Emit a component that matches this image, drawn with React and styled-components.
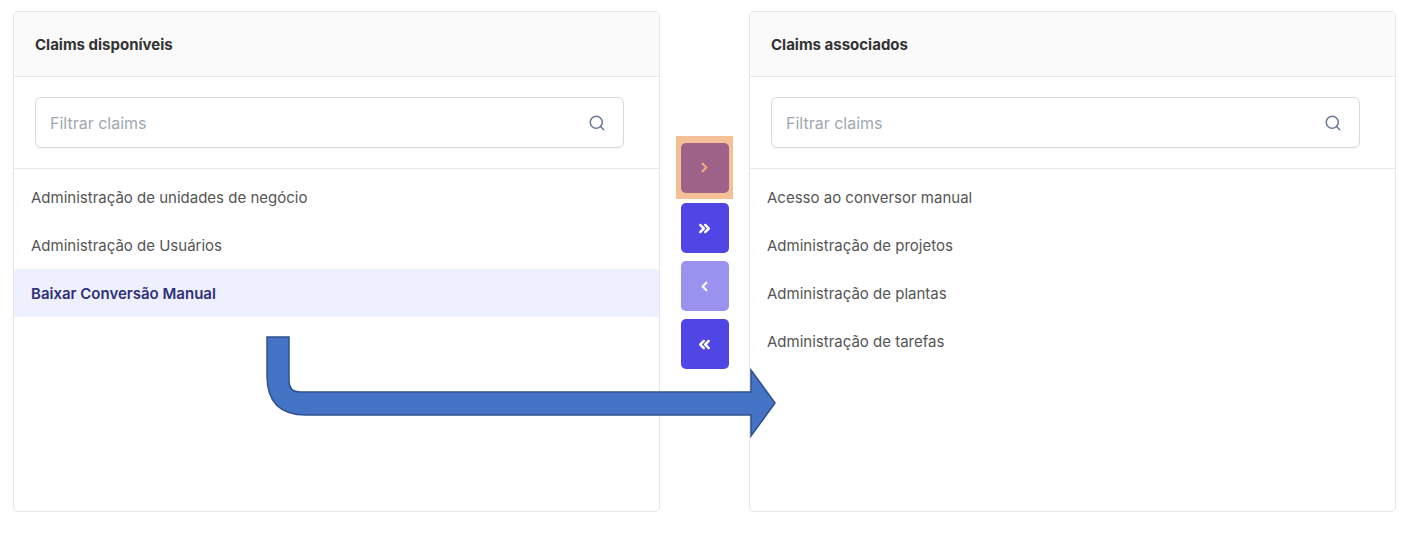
import React from 'react'
import styled, { createGlobalStyle } from 'styled-components'
import { Search, ChevronRight, ChevronLeft, ChevronsRight, ChevronsLeft } from 'lucide-react'

const GlobalStyle = createGlobalStyle`
  * { box-sizing: border-box; }
  body {
    margin: 0;
    background: #ffffff;
    font-family: Inter, "Noto Sans", sans-serif;
  }
`

const available = [
  { id: 1, name: 'Administração de unidades de negócio' },
  { id: 2, name: 'Administração de Usuários' },
  { id: 3, name: 'Baixar Conversão Manual', selected: true },
]

const associated = [
  { id: 4, name: 'Acesso ao conversor manual' },
  { id: 5, name: 'Administração de projetos' },
  { id: 6, name: 'Administração de plantas' },
  { id: 7, name: 'Administração de tarefas' },
]

const ClaimPanel = ({ title, items }) => (
  <Panel>
    <PanelHeader>{title}</PanelHeader>
    <SearchBox>
      <SearchField>
        <SearchInput placeholder="Filtrar claims" />
        <Search size={18} strokeWidth={2} color="#6b7a90" />
      </SearchField>
    </SearchBox>
    <List>
      {items.map((item) => (
        <ListItem key={item.id} $selected={item.selected}>
          {item.name}
        </ListItem>
      ))}
    </List>
  </Panel>
)

const App = () => {
  return (
    <>
      <GlobalStyle />
      <Page>
        <ClaimPanel title="Claims disponíveis" items={available} />

        <Controls>
          <Highlight>
            <MoveButton $variant="focus">
              <ChevronRight size={15} strokeWidth={3.5} />
            </MoveButton>
          </Highlight>
          <MoveButton>
            <ChevronsRight size={17} strokeWidth={3.5} />
          </MoveButton>
          <MoveButton $variant="disabled">
            <ChevronLeft size={15} strokeWidth={3.5} />
          </MoveButton>
          <MoveButton>
            <ChevronsLeft size={17} strokeWidth={3.5} />
          </MoveButton>
        </Controls>

        <ClaimPanel title="Claims associados" items={associated} />

        <Arrow viewBox="0 0 520 100" width="520" height="100">
          <path
            d="M1 1 H23 V45 Q23 56 34 56 H485 V34 L509 67 L485 100 V79 H40 Q1 79 1 40 Z"
            fill="#4472c4"
            stroke="#2f528f"
            strokeWidth="1.5"
          />
        </Arrow>
      </Page>
    </>
  )
}

const Page = styled.div`
  position: relative;
  display: flex;
  padding: 11px 15px 0 13px;
  height: 547px;
`

const Panel = styled.div`
  width: 647px;
  height: 501px;
  flex-shrink: 0;
  border: 1px solid #e6e6e6;
  border-radius: 5px;
  background: #ffffff;
  display: flex;
  flex-direction: column;
  overflow: hidden;
`

const PanelHeader = styled.div`
  height: 65px;
  display: flex;
  align-items: center;
  padding-left: 21px;
  background: #fafafa;
  border-bottom: 1px solid #e8e8e8;
  font-size: 15px;
  font-weight: 700;
  color: #333333;
`

const SearchBox = styled.div`
  padding: 20px 35px 20px 21px;
  border-bottom: 1px solid #e8e8e8;
`

const SearchField = styled.div`
  height: 51px;
  display: flex;
  align-items: center;
  padding: 0 17px 0 12px;
  border: 1px solid #d9d9d9;
  border-radius: 6px;
  box-shadow: 0 1px 2px rgba(0, 0, 0, 0.04);
`

const SearchInput = styled.input`
  flex: 1;
  border: none;
  outline: none;
  background: transparent;
  font-family: Inter, "Noto Sans", sans-serif;
  font-size: 16px;
  color: #333;

  &::placeholder {
    color: #a0a6b1;
  }
`

const List = styled.div`
  padding-top: 4px;
  display: flex;
  flex-direction: column;
`

const ListItem = styled.div`
  height: 48px;
  display: flex;
  align-items: center;
  padding-left: 17px;
  font-size: 15px;
  font-weight: ${(p) => (p.$selected ? 600 : 400)};
  color: ${(p) => (p.$selected ? '#2f2f7a' : '#555555')};
  background: ${(p) => (p.$selected ? '#eef1fd' : 'transparent')};
`

const Controls = styled.div`
  width: 89px;
  flex-shrink: 0;
  display: flex;
  flex-direction: column;
  align-items: center;
  padding-top: 125px;
  gap: 8px;
`

const Highlight = styled.div`
  width: 57px;
  height: 63px;
  background: #f5bf97;
  display: flex;
  align-items: center;
  justify-content: center;
  margin-bottom: -4px;
`

const MoveButton = styled.button`
  width: 48px;
  height: 50px;
  border: none;
  border-radius: 5px;
  display: flex;
  align-items: center;
  justify-content: center;
  cursor: pointer;
  color: ${(p) => (p.$variant === 'focus' ? '#f2a878' : '#ffffff')};
  background: ${(p) =>
    p.$variant === 'focus'
      ? '#9e6289'
      : p.$variant === 'disabled'
      ? '#9993ef'
      : '#4f46e5'};
`

const Arrow = styled.svg`
  position: absolute;
  left: 266px;
  top: 336px;
  overflow: visible;
`

export default App
